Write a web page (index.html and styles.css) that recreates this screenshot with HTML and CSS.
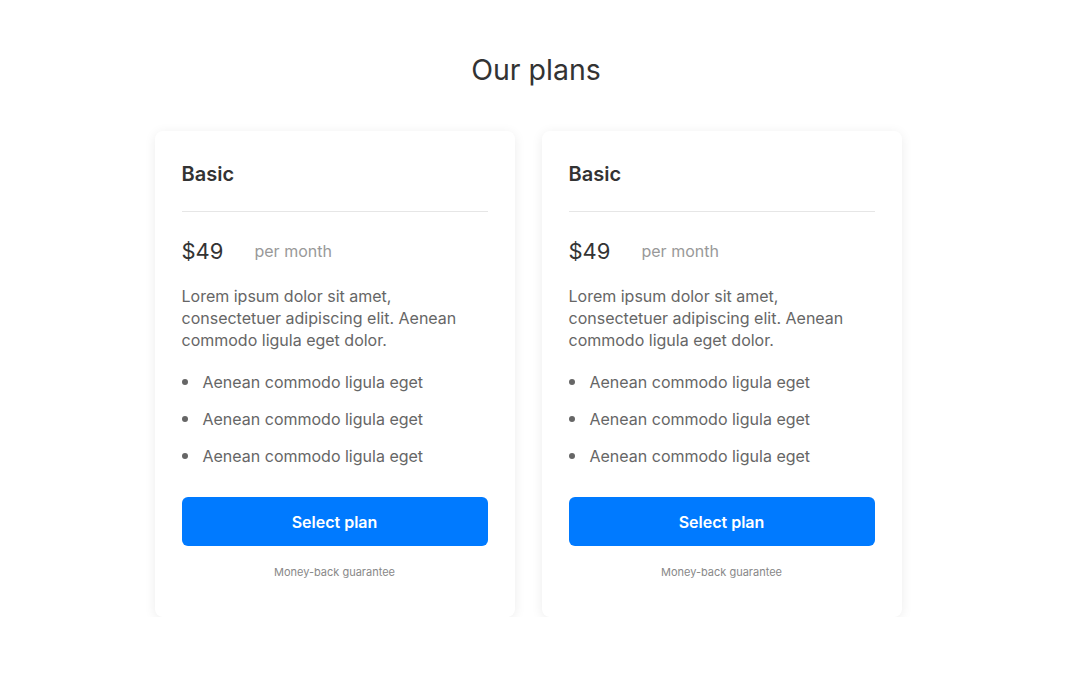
FILE: index.html
```html
<!DOCTYPE html>
<html lang="en">
<head>
    <meta charset="UTF-8">
    <meta name="viewport" content="width=device-width, initial-scale=1.0">
    <title>Our plans</title>
    <link rel="stylesheet" href="styles.css">
</head>
<body>
    <h1 class="title">Our plans</h1>
    <div class="plans">
        <div class="plan">
            <h2 class="plan-name">Basic</h2>
            <div class="plan-price">
                <span class="amount">$49</span>
                <span class="period">per month</span>
            </div>
            <p class="plan-desc">Lorem ipsum dolor sit amet, consectetuer adipiscing elit. Aenean commodo ligula eget dolor.</p>
            <ul class="features">
                <li>Aenean commodo ligula eget</li>
                <li>Aenean commodo ligula eget</li>
                <li>Aenean commodo ligula eget</li>
            </ul>
            <button class="select-btn">Select plan</button>
            <p class="guarantee">Money-back guarantee</p>
        </div>
        <div class="plan">
            <h2 class="plan-name">Basic</h2>
            <div class="plan-price">
                <span class="amount">$49</span>
                <span class="period">per month</span>
            </div>
            <p class="plan-desc">Lorem ipsum dolor sit amet, consectetuer adipiscing elit. Aenean commodo ligula eget dolor.</p>
            <ul class="features">
                <li>Aenean commodo ligula eget</li>
                <li>Aenean commodo ligula eget</li>
                <li>Aenean commodo ligula eget</li>
            </ul>
            <button class="select-btn">Select plan</button>
            <p class="guarantee">Money-back guarantee</p>
        </div>
    </div>
</body>
</html>
```

FILE: styles.css
```css
body {
    font-family: Inter, "Noto Sans", Arial, sans-serif;
    margin: 0;
    background-color: #fff;
    color: #333;
}
.title {
    font-size: 28.5px;
    font-weight: 400;
    line-height: 34px;
    text-align: center;
    margin: 0;
    padding-top: 53px;
    color: #333;
}
.plans {
    display: flex;
    justify-content: center;
    gap: 27px;
    margin-top: 44px;
    padding-right: 16px;
}
.plan {
    width: 306px;
    padding: 31px 27px 37px;
    background-color: #fff;
    border-radius: 8px;
    box-shadow: 0 2px 12px rgba(0, 0, 0, 0.08);
}
.plan-name {
    font-size: 20px;
    font-weight: 600;
    line-height: 24px;
    margin: 0;
    padding-bottom: 25px;
    border-bottom: 1px solid #e6e6e6;
    color: #333;
}
.plan-price {
    display: flex;
    align-items: center;
    gap: 31px;
    margin-top: 27px;
    line-height: 24px;
}
.amount {
    font-size: 22px;
    color: #333;
}
.period {
    font-size: 16px;
    color: #999;
}
.plan-desc {
    font-size: 16px;
    line-height: 22px;
    color: #666;
    margin: 22px 0 0;
}
.features {
    list-style: none;
    padding: 0;
    margin: 20px 0 0;
}
.features li {
    position: relative;
    padding-left: 21px;
    font-size: 16px;
    line-height: 22px;
    color: #666;
    margin-bottom: 15px;
}
.features li:last-child {
    margin-bottom: 0;
}
.features li::before {
    content: "";
    position: absolute;
    left: 0;
    top: 8px;
    width: 6px;
    height: 6px;
    border-radius: 50%;
    background-color: #666;
}
.select-btn {
    display: block;
    width: 100%;
    height: 49px;
    margin-top: 30px;
    border: none;
    border-radius: 6px;
    background-color: #007aff;
    color: #fff;
    font-family: inherit;
    font-size: 16px;
    font-weight: 600;
}
.guarantee {
    font-size: 11px;
    line-height: 15px;
    color: #888;
    text-align: center;
    margin: 19px 0 0;
}
```
